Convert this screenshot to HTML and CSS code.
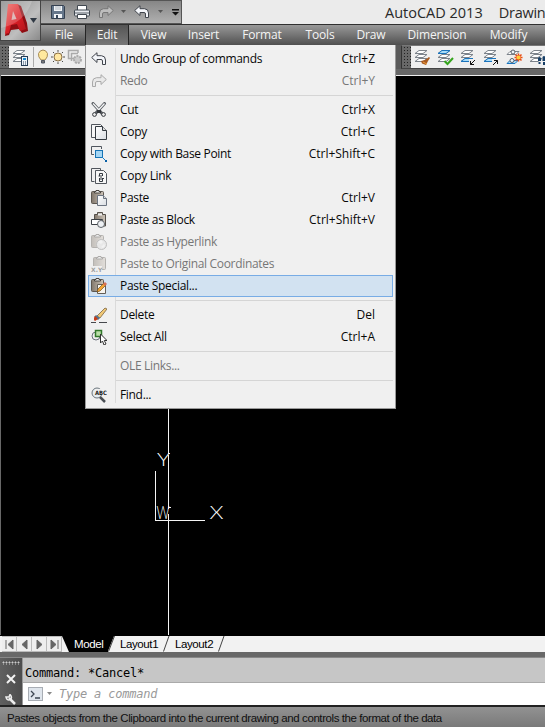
FILE: index.html
```html
<!DOCTYPE html>
<html lang="en">
<head>
<meta charset="utf-8">
<title>AutoCAD 2013</title>
<link rel="stylesheet" href="styles.css">
</head>
<body>
<svg class="defs" width="0" height="0">
  <defs>
    <linearGradient id="paper" x1="0" y1="0" x2="1" y2="1"><stop offset="0" stop-color="#fff"/><stop offset="1" stop-color="#d9dde2"/></linearGradient>
    <linearGradient id="board" x1="0" y1="0" x2="1" y2="0"><stop offset="0" stop-color="#81776c"/><stop offset="1" stop-color="#cfc6bb"/></linearGradient>
    <linearGradient id="red" x1="0" y1="0" x2="1" y2="1"><stop offset="0" stop-color="#f0625a"/><stop offset=".5" stop-color="#da1f26"/><stop offset="1" stop-color="#b0131a"/></linearGradient>
    <symbol id="undo" viewBox="0 0 16 16"><path d="M.7 6.500 6 1.700v3h4.500q4 .3 4 4.300v4.500h-3V10q0-1.500-1.500-1.500H6v3z" fill="#f4f6fa" stroke="#40444c" stroke-linejoin="round"/></symbol>
    <symbol id="redo" viewBox="0 0 16 16"><path d="M15.300 6.500 10 1.700v3H5.500q-4 .3-4 4.300v4.500h3V10q0-1.500 1.500-1.500h4v3z" fill="#e9e9e9" stroke="#a9a9a9" stroke-linejoin="round"/></symbol>
    <symbol id="layers" viewBox="0 0 16 16"><g fill="#fff" stroke="#7c838b"><path d="m1 12.500 4-3h8l-4 3z"/><path d="m1 8.500 4-3h8l-4 3z"/><path d="m1 4.500 4-3h8l-4 3z"/></g></symbol>
    <symbol id="clip" viewBox="0 0 16 16"><rect x="1.500" y="2.500" width="12" height="12" rx="1" fill="url(#board)" stroke="#5d5750"/><path d="M4.500 4V2.500H6v-1h3v1h1.500V4z" fill="#eee" stroke="#49443f"/></symbol>
  </defs>
</svg>
<div class="app">
  <header class="top">
    <div class="logo">
      <svg width="39" height="39" viewBox="0 0 39 39">
        <path d="m9 4 7-1 4 2 6 17 1 8-6 2-3-4-8 1-2 5-4 1z" fill="#8f0e13"/>
        <path d="M7 3h10l8 25-6 2-3-7-6 1-2 8-4 1z" fill="url(#red)"/>
        <path d="m12 10-1.500 9 5-1z" fill="#d6aaa9"/>
        <path d="M0 27Q24 22 31 0H0z" fill="#fff" opacity=".2"/>
        <path d="M29 17h7l-3.500 5z" fill="#303944"/>
      </svg>
    </div>
    <div class="titlebar">
      <div class="quick">
        <svg class="save" width="16" height="16"><path d="M1.500 1.500h12l1 1v12h-13z" fill="#66778b" stroke="#344050"/><path d="M4 2h8v5H4zM4 10h8v4H4z" fill="#f1f4f7"/><path d="M5 3h6M5 5h6" stroke="#aeb6be"/><path d="M6 11h2v3H6z" fill="#38475b"/></svg>
        <svg class="print" width="16" height="16"><path d="M3.500 6V1.500h9V6" fill="#fff" stroke="#414850"/><rect x=".5" y="6" width="15" height="6" rx="1" fill="#e7eaee" stroke="#414850"/><path d="M1 9h14" stroke="#596168"/><path d="M3.500 10.500h9v4h-9z" fill="#fff" stroke="#414850"/></svg>
        <svg class="re" width="16" height="16"><path d="M15.300 6.500 10 1.700v3H5.500q-4 .3-4 4.300v4.500h3V10q0-1.500 1.500-1.500h4v3z" fill="#bdbdbd" stroke="#777"/></svg>
        <svg class="drop" width="5" height="4"><path d="M0 0h5L2.500 3z" fill="#555"/></svg>
        <svg class="un" width="16" height="16"><use href="#undo"/></svg>
        <svg class="drop two" width="5" height="4"><path d="M0 0h5L2.500 3z" fill="#555"/></svg>
        <svg class="more" width="8" height="7"><path d="M0 0h7v1.500H0zM0 3h7L3.500 6.500z" fill="#111"/></svg>
      </div>
      <div class="title"><span>AutoCAD 2013</span><span class="doc">Drawin</span></div>
    </div>
    <nav class="menubar">
      <span>File</span><span class="open">Edit</span><span>View</span><span>Insert</span><span>Format</span><span>Tools</span><span>Draw</span><span>Dimension</span><span>Modify</span>
    </nav>
  </header>
  <div class="toolbar">
    <div class="dock left">
      <i class="grip"></i>
      <svg class="tool" width="17" height="17" viewBox="0 0 17 17"><use href="#layers" width="16" height="16"/><rect x="9.500" y="7.500" width="6" height="9" fill="#eef4fa" stroke="#263d57"/><path d="M11 9h3v2h-3z" fill="#1688cf"/><path d="M11 13h1m1 0h1m-3 2h1m1 0h1" stroke="#263d57"/></svg>
      <div class="layerbox">
        <svg width="12" height="16"><path d="M4 11Q1 8 1.500 4.500 3 1 6 1t4.500 3.500Q11 8 8 11z" fill="#ffe99d" stroke="#a78b55"/><path d="M4.500 11.500h3v2.500h-3z" fill="#777" stroke="#505763"/></svg>
        <svg width="16" height="16"><path d="M8 1v14M1 8h14M3 3l10 10M3 13 13 3" stroke="#4a4a46"/><circle cx="8" cy="8" r="4.200" fill="#ffe7a2" stroke="#eeeeed" stroke-width="2"/><circle cx="8" cy="8" r="4" fill="#ffe7a2" stroke="#896f45"/></svg>
        <svg width="16" height="16"><path d="M8 9.500H1.500v-8H11V4M4.500 12V4.500H11" fill="none" stroke="#aaa" stroke-width="1.500"/><circle cx="10.500" cy="10.500" r="3.500" fill="#ccc" stroke="#aaa" stroke-width="2" stroke-dasharray="2 1"/></svg>
      </div>
    </div>
    <div class="dock right">
      <i class="grip"></i>
      <svg class="tool" width="17" height="17"><use href="#layers" width="16" height="16"/><path d="m15 8-4 3-4 1 1 2.500 4 1.500 2-4 2-3z" fill="#a85b21"/><path d="m9 13 4 2" stroke="#ef9c3a"/></svg>
      <svg class="tool" width="17" height="17"><use href="#layers" width="16" height="16"/><path d="m1 4.500 4-3h8l-4 3z" fill="#a9dcf8" stroke="#1b74bd"/><path d="m7.500 12 3 3 5.500-6" fill="none" stroke="#35a51d" stroke-width="2"/></svg>
      <svg class="tool" width="17" height="17"><use href="#layers" width="16" height="16"/><path d="m1 12.500 4-3h8l-4 3z" fill="#a9dcf8" stroke="#1b74bd"/><path d="M9 10h7v6H9z" fill="#efefef"/><path d="m15 11-4.500 4.500m0-3.500v3.500H14" fill="none" stroke="#111"/></svg>
      <svg class="tool" width="17" height="17"><use href="#layers" width="16" height="16"/><path d="m1 12.500 4-3h8l-4 3z" fill="#a9dcf8" stroke="#1b74bd"/><path d="M9 10h7v6H9z" fill="#efefef"/><path d="m10 16 4.500-4.500H11m3.500 0V15" fill="none" stroke="#111"/></svg>
      <svg class="tool" width="17" height="17"><path d="m1 5.500 3-3h9l-3 3z" fill="#fff" stroke="#7c838b"/><path d="m1 14.500 3-3h8l-3 3z" fill="#a9dcf8" stroke="#1b74bd"/><circle cx="7" cy="3" r="2" fill="#edf5fa" stroke="#59616b"/><circle cx="6" cy="11.500" r="2" fill="#edf5fa" stroke="#59616b"/><path d="M12.500 4.500v8M8.500 8.500h8M9.500 5.500l6 6m0-6-6 6" stroke="#e84b16" stroke-width="1.500"/><circle cx="12.500" cy="8.500" r="2" fill="#ffce38"/></svg>
      <svg class="tool" width="17" height="17"><use href="#layers" width="16" height="16"/><path d="M9 9q1.500-2 3 0v3H9zm.5 4h2v2h-2zm4-5q1.500-2 3 0v4h-3zm.5 5h2v3h-2z" fill="#173f67"/></svg>
    </div>
  </div>
  <main class="drawing">
    <svg class="ucs" width="543" height="559" viewBox="2 76 543 559" shape-rendering="crispEdges">
      <path d="M168.500 76v378M168.500 455v54M168.500 514v121M155.500 471v50M155 520.500h50M168 453.500h2M169 507.500h2" stroke="#f5f5f5" fill="none"/>
      <text x="157" y="466" textLength="13" lengthAdjust="spacingAndGlyphs">Y</text><text x="156.500" y="519" textLength="13" lengthAdjust="spacingAndGlyphs">W</text><text x="209.500" y="519" textLength="14" lengthAdjust="spacingAndGlyphs">X</text>
    </svg>
  </main>
  <div class="tabs">
    <span class="pager"><svg width="15" height="16"><path d="M4 3v9M11 3v9L6 7.500z"/></svg></span>
    <span class="pager"><svg width="15" height="16"><path d="M10 3v9L5 7.500z"/></svg></span>
    <span class="pager"><svg width="15" height="16"><path d="M5 3v9l5-4.500z"/></svg></span>
    <span class="pager"><svg width="15" height="16"><path d="M4 3v9l5-4.500zM11 3v9"/></svg></span>
    <span class="model">Model</span><svg class="slash" width="7" height="16"><path d="M0 0h6L0 15z" fill="#000"/><path d="M6.500 0 .5 15.500"/></svg><span class="layout">Layout1</span><svg class="slash" width="7" height="16"><path d="M6 0 .5 15.500"/></svg><span class="layout">Layout2</span><svg class="slash" width="7" height="16"><path d="M6 0 .5 15.500"/></svg>
  </div>
  <section class="command">
    <div class="handle"><i class="dots"></i>
      <svg width="10" height="10"><path d="m1 1 8 8m0-8L1 9" stroke="#f3f3f3" stroke-width="2"/></svg>
      <svg class="wrench" width="12" height="11"><path d="m4 4 6 6" stroke="#eee" stroke-width="2.500"/><path d="M1 3q1 4 4 2.500T5 .5L4 3z" fill="none" stroke="#eee" stroke-width="1.500"/></svg>
    </div>
    <div class="console">
      <div class="history">Command: *Cancel*</div>
      <div class="prompt"><svg width="15" height="14"><rect x=".5" y=".5" width="14" height="13" fill="#dfe5ec" stroke="#a8adb4"/><path d="m3 4 3 3-3 3m4 1h5" fill="none" stroke="#3d4652" stroke-width="1.300"/></svg><svg class="drop" width="5" height="4"><path d="M0 0h5L2.500 3z" fill="#888"/></svg><span>Type a command</span></div>
    </div>
  </section>
  <footer class="status">Pastes objects from the Clipboard into the current drawing and controls the format of the data</footer>

  <div class="menu">
    <div class="row"><svg class="icon"><use href="#undo"/></svg><span>Undo Group of commands</span><kbd>Ctrl+Z</kbd></div>
    <div class="row off"><svg class="icon"><use href="#redo"/></svg><span>Redo</span><kbd>Ctrl+Y</kbd></div>
    <hr>
    <div class="row"><svg class="icon"><path d="m2 1.500 9 10M13.500 1.500l-9 10" stroke="#5a5e63" stroke-width="3" stroke-linecap="round"/><path d="m2 1.500 6 6.500M13.500 1.500 7.500 8" stroke="#f4f5f6" stroke-width="1.300"/><path d="M6 8h4v3H6z" fill="#33363b"/><circle cx="3.500" cy="12.500" r="1.900" fill="#eee" stroke="#33363b"/><circle cx="12.500" cy="12.500" r="1.900" fill="#eee" stroke="#33363b"/></svg><span>Cut</span><kbd>Ctrl+X</kbd></div>
    <div class="row"><svg class="icon"><path d="M4 13.500H.5V.5h9l2 2" fill="#f6f6f6" stroke="#51565d"/><path d="M4.500 2.500h7l4 4v9h-11z" fill="url(#paper)" stroke="#343a41"/><path d="M11.500 2.500v4h4" fill="#ddd" stroke="#343a41"/></svg><span>Copy</span><kbd>Ctrl+C</kbd></div>
    <div class="row"><svg class="icon"><path d="M3 8.500H.5v-8h10V3" fill="none" stroke="#50565e"/><rect x="4.500" y="4.500" width="7" height="7" fill="#a5d6f4" stroke="#1674b5"/><path d="m11 11 4 4" stroke="#167fca"/><path d="M14 14h2v2h-2z" fill="#075fa5"/></svg><span>Copy with Base Point</span><kbd>Ctrl+Shift+C</kbd></div>
    <div class="row"><svg class="icon"><path d="M3.500 13.500H.5V.5h9v2" fill="none" stroke="#51565d"/><path d="M4.500 2.500h8l3 3v10h-11z" fill="#f7f7f7" stroke="#51565d"/><path d="M8.500 8V5.500h3V8m-3 2v3.500h3V10m-1.500-3v5M7.500 8H9m2 2.500h2" fill="none" stroke="#343a41"/></svg><span>Copy Link</span></div>
    <div class="row"><svg class="icon"><use href="#clip" x="-1" y="-1" width="16" height="16"/><path d="M6.500 5.500h6l3 3v7h-9z" fill="url(#paper)" stroke="#6b7481"/><path d="M12.500 5.500v3h3" fill="#ddd" stroke="#6b7481"/></svg><span>Paste</span><kbd>Ctrl+V</kbd></div>
    <div class="row"><svg class="icon"><path d="M3.500 7V2.500h3v-2h5v2h3V14H12" fill="url(#board)" stroke="#55504a"/><path d="M7 1.500h4v2H7z" fill="#eee"/><path d="M.5 7.500h11v5H.5z" fill="#fff" stroke="#3c4146"/><circle cx="10" cy="12" r="3.500" fill="#edf0f3" stroke="#5c6166"/></svg><span>Paste as Block</span><kbd>Ctrl+Shift+V</kbd></div>
    <div class="row off"><svg class="icon faded"><use href="#clip" x="-1" y="-1" width="16" height="16"/><circle cx="10.500" cy="10.500" r="5" fill="#ddd" stroke="#777"/><path d="m7 8 3-2 2 2-2 2zm3 5 3-3 1 2-2 2" fill="#f7f7f7"/></svg><span>Paste as Hyperlink</span></div>
    <div class="row off"><svg class="icon faded"><use href="#clip" x="1" y="-1" width="16" height="16"/><path d="M0 10h11v6H0z" fill="#f0f0f0"/><text x="0" y="15.500" class="xy">X,Y</text></svg><span>Paste to Original Coordinates</span></div>
    <div class="row selected"><svg class="icon"><use href="#clip" x="-1" y="-1" width="16" height="16"/><path d="M6.500 6.500h8v9h-8z" fill="#f7f4ef" stroke="#645e57"/><path d="m6 14 1-3 6-6 2 2-6 6z" fill="#f4a534" stroke="#72501c" stroke-width=".7"/><path d="m12 6 2-2 2 2-2 2z" fill="#d56e55"/></svg><span>Paste Special...</span></div>
    <hr>
    <div class="row"><svg class="icon"><path d="m6 9 8-8 2 1-7 9z" fill="#f1c875" stroke="#6c5433" stroke-width=".7"/><path d="m5 8 4 3-2 2-4-3z" fill="#52738e"/><path d="m4 9 3 3-3 2-1-1v-2z" fill="#c83a15"/><path d="M0 15.500h5m3 0h8" stroke="#46494d"/></svg><span>Delete</span><kbd>Del</kbd></div>
    <div class="row"><svg class="icon"><circle cx="5" cy="7" r="4" fill="none" stroke="#69717b"/><rect x="4.500" y="1.500" width="6" height="6" fill="#b9dfa8" stroke="#30782a" stroke-width="1.500"/><path d="M9.500 5v9l2-2 1.500 4 2-1-1.700-3.500H16z" fill="#fff" stroke="#333"/></svg><span>Select All</span><kbd>Ctrl+A</kbd></div>
    <hr>
    <div class="row off"><svg class="icon"></svg><span>OLE Links...</span></div>
    <hr>
    <div class="row"><svg class="icon"><circle cx="6" cy="6" r="5" fill="#e6edf2" stroke="#6d757c"/><path d="m9 10 5 5" stroke="#4a4f55" stroke-width="2.500"/><path d="M4 2h12v6H4z" fill="#f0f0f0"/><text x="4" y="7.500" class="abc" textLength="12" lengthAdjust="spacingAndGlyphs">ABC</text></svg><span>Find...</span></div>
  </div>
</div>
</body>
</html>
```
FILE: styles.css
```css
* { box-sizing: border-box; }
body { margin: 0; background: #000; font: 12px "Open Sans", "Noto Sans", sans-serif; }
svg { display: block; flex: none; }
.defs { position: absolute; }
.app { position: relative; width: 545px; height: 727px; overflow: hidden; display: flex; flex-direction: column; background: #686868; }
.top { height: 45px; display: grid; grid-template: 24px 21px / 41px 1fr; background: linear-gradient(#ebebeb 0 24px, #777 24px, #555); }
.logo { grid-row: 1 / 3; height: 41px; border: 1px solid #444; background: linear-gradient(135deg, #858585, #bfbfbf 60%, #8a8a8a); }
.titlebar { display: flex; min-width: 0; }
.quick { width: 141px; height: 24px; padding: 3px 0 0 9px; display: flex; align-items: flex-start; background: linear-gradient(#868686, #b0b0b0); border: 1px solid #555; border-left: 0; }
.print { margin-left: 8px; }
.re { margin-left: 8px; }
.quick .drop { margin: 6px 0 0 7px; }
.un { margin-left: 8px; }
.quick .two { margin-left: 8px; }
.more { margin: 5px 0 0 9px; }
.title { flex: 1; min-width: 0; overflow: hidden; padding-left: 203px; font-size: 14.5px; line-height: 25px; color: #292929; white-space: nowrap; display: flex; }
.doc { margin-left: 16px; letter-spacing: -.25px; }
.menubar { border-top: 1px solid #303030; background: linear-gradient(#999, #505050); color: #f4f4f4; display: grid; grid-template-columns: 44px 44px 49px 51px 66px 50px 52px 80px 63px; line-height: 20px; letter-spacing: -.15px; text-align: center; }
.menubar span:first-child { padding-left: 2px; }
.open { background: linear-gradient(#555, #777); border: 1px solid #252525; border-top: 0; }
.toolbar { height: 24px; display: flex; justify-content: space-between; background: #5b5b5b; }
.dock { height: 24px; background: #efefef; display: flex; align-items: center; border-top: 1px solid #777; border-bottom: 1px solid #444; }
.left { width: 90px; }
.right { width: 144px; border-left: 1px solid #333; }
.grip { width: 9px; height: 22px; margin-right: 3px; flex: none; background: radial-gradient(circle, #222 0 .7px, transparent 1px) 1px 3px / 3px 3px, #686868; }
.tool { margin-right: 6px; }
.left .tool { margin-right: 4px; }
.right .grip { margin-right: 3px; }
.layerbox { height: 20px; padding-left: 3px; flex: none; display: flex; align-items: center; gap: 1px; background: #eee; border-left: 1px solid #aaa; }
.drawing { height: 566px; margin-left: 1px; padding-left: 1px; background: #000; border-top: 6px solid #686868; box-shadow: inset 0 1px #eee; padding-top: 1px; flex: none; }
.ucs text { font: 300 17px Lato, sans-serif; fill: #fff; }
.tabs { height: 17px; padding-left: 2px; background: #f2f2f2; border-top: 1px solid #000; display: flex; font: 11.5px/16px "Liberation Sans", sans-serif; letter-spacing: -.4px; }
.pager { width: 15px; border: 1px solid #bbb; border-left: 0; background: #eee; }
.pager path { fill: #666; stroke: #666; }
.model { background: #000; color: #fff; width: 46px; padding-left: 12px; clip-path: polygon(0 0, 100% 0, 100% 100%, 7px 100%); }
.slash path { stroke: #444; fill: none; }
.slash path[fill="#000"] { fill: #000; stroke: none; }
.layout { width: 48px; padding-left: 5px; }
.command { margin-top: 5px; height: 50px; display: flex; border-top: 1px solid #888; border-bottom: 2px solid #222; background: #c6c6c6; }
.handle { width: 23px; background: linear-gradient(90deg, #606060, #4d4d4d); display: flex; flex-direction: column; align-items: center; border-right: 1px solid #999; }
.dots { height: 6px; width: 18px; margin: 3px 0 9px; background: radial-gradient(circle, #ccc 0 .8px, transparent 1.2px) 0 0 / 3px 3px; }
.wrench { margin-top: 10px; }
.console { flex: 1; font: 12px "DejaVu Sans Mono", monospace; }
.history { height: 24px; padding: 1px 0 0 2px; line-height: 29px; letter-spacing: -.22px; }
.prompt { height: 23px; background: #fff; border-top: 1px solid #aaa; display: flex; align-items: center; padding-left: 5px; color: #999; font-style: italic; letter-spacing: -.2px; }
.prompt .drop { margin: 0 7px 0 4px; }
.status { flex: 1; background: linear-gradient(#929292, #777); padding-left: 7px; font: 11.5px/22px "Liberation Sans", sans-serif; letter-spacing: -.42px; color: #101010; white-space: nowrap; }
.menu { position: absolute; left: 85px; top: 45px; width: 311px; height: 364px; padding: 3px 2px 2px; border: 1px solid #999; border-top: 0; background: linear-gradient(90deg, transparent 29px, #dadada 29px 30px, transparent 30px) 0 3px / 100% 355px no-repeat, #f0f0f0; }
.row { height: 22px; display: flex; align-items: center; padding: 0 17px 0 2px; border: 1px solid transparent; line-height: 20px; color: #080808; white-space: nowrap; letter-spacing: -.32px; }
.row .icon { width: 16px; height: 16px; margin-right: 13px; }
kbd { font: inherit; margin-left: auto; letter-spacing: 0; }
.off { color: #777; }
.faded { opacity: .4; }
.selected { background: #d2e2f1; border-color: #78ace5; }
.menu hr { height: 7px; border: 0; margin: 0 0 0 28px; background: linear-gradient(transparent 3px, #d5d5d5 3px 4px, transparent 4px); }
.xy, .abc { font: bold 6px "DejaVu Sans", sans-serif; fill: #222; letter-spacing: 0; }
```
